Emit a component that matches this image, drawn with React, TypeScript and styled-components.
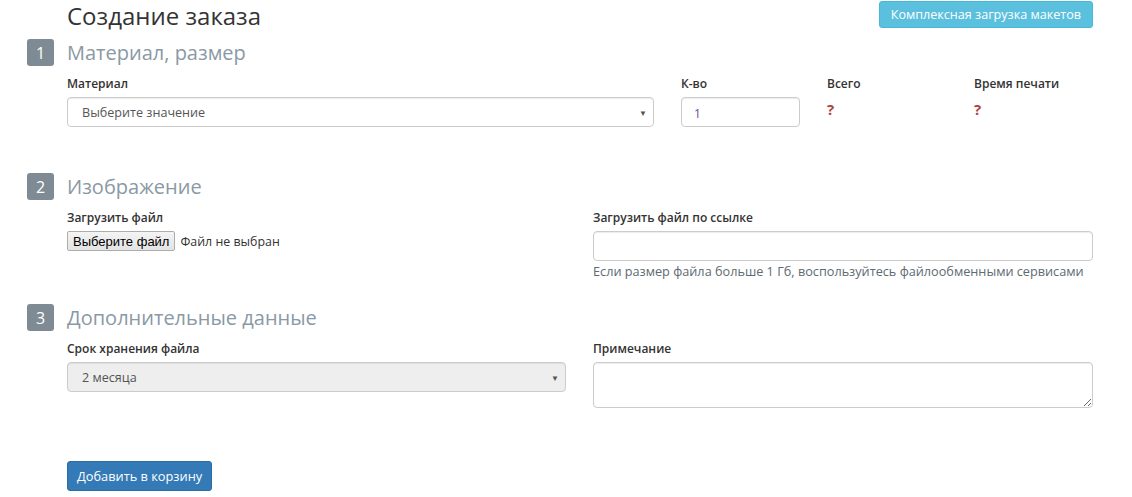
import styled, { createGlobalStyle } from "styled-components";

const GlobalStyle = createGlobalStyle`
  body {
    margin: 0;
    background: #fff;
    font-family: "Open Sans", "Liberation Sans", sans-serif;
    font-size: 13px;
    color: #333;
  }
  * { box-sizing: border-box; }
`;

const sections = {
  material: "Материал, размер",
  image: "Изображение",
  extra: "Дополнительные данные",
};

const App = () => {
  return (
    <Page>
      <GlobalStyle />
      <TitleRow>
        <Title>Создание заказа</Title>
        <InfoButton>Комплексная загрузка макетов</InfoButton>
      </TitleRow>

      <SectionHeader>
        <Badge>1</Badge>
        <SectionTitle>{sections.material}</SectionTitle>
      </SectionHeader>
      <MaterialGrid>
        <Field>
          <Label>Материал</Label>
          <Select>
            <span>Выберите значение</span>
            <Caret>▼</Caret>
          </Select>
        </Field>
        <Field>
          <Label>К-во</Label>
          <Input>
            <QtyValue>1</QtyValue>
          </Input>
        </Field>
        <Field>
          <Label>Всего</Label>
          <Unknown>?</Unknown>
        </Field>
        <Field>
          <Label>Время печати</Label>
          <Unknown>?</Unknown>
        </Field>
      </MaterialGrid>

      <SectionHeader $top={46}>
        <Badge>2</Badge>
        <SectionTitle>{sections.image}</SectionTitle>
      </SectionHeader>
      <TwoCols>
        <Field>
          <Label>Загрузить файл</Label>
          <FilePicker>
            <FileButton>Выберите файл</FileButton>
            <FileName>Файл не выбран</FileName>
          </FilePicker>
        </Field>
        <Field>
          <Label>Загрузить файл по ссылке</Label>
          <Input />
          <Help>Если размер файла больше 1 Гб, воспользуйтесь файлообменными сервисами</Help>
        </Field>
      </TwoCols>

      <SectionHeader $top={24}>
        <Badge>3</Badge>
        <SectionTitle>{sections.extra}</SectionTitle>
      </SectionHeader>
      <TwoCols>
        <Field>
          <Label>Срок хранения файла</Label>
          <Select $disabled>
            <span>2 месяца</span>
            <Caret>▼</Caret>
          </Select>
        </Field>
        <Field>
          <Label>Примечание</Label>
          <TextArea />
        </Field>
      </TwoCols>

      <Actions>
        <PrimaryButton>Добавить в корзину</PrimaryButton>
      </Actions>
    </Page>
  );
};

const Page = styled.div`
  width: 1132px;
  padding: 0 39px 0 27px;
`;

const TitleRow = styled.div`
  display: flex;
  justify-content: space-between;
  align-items: flex-start;
  margin-left: 40px;
  height: 39px;
`;

const Title = styled.h1`
  margin: 0;
  font-size: 24px;
  font-weight: 400;
  line-height: 32px;
  color: #333;
`;

const InfoButton = styled.button`
  margin-top: 1px;
  height: 27px;
  padding: 0 11px;
  border: 1px solid #46b8da;
  border-radius: 3px;
  background: #5bc0de;
  color: #fff;
  font-family: inherit;
  font-size: 12.6px;
`;

const SectionHeader = styled.div<{ $top?: number }>`
  display: flex;
  align-items: center;
  gap: 13px;
  height: 27px;
  margin-top: ${(p) => p.$top ?? 0}px;
`;

const Badge = styled.div`
  width: 27px;
  height: 27px;
  border-radius: 3px;
  background: #7f8b94;
  color: #fff;
  font-size: 16px;
  display: flex;
  align-items: center;
  justify-content: center;
`;

const SectionTitle = styled.h2`
  margin: 0;
  font-size: 20px;
  font-weight: 400;
  color: #8a99a4;
`;

const MaterialGrid = styled.div`
  display: grid;
  grid-template-columns: 587px 119px 120px 119px;
  column-gap: 27px;
  margin: 9px 0 0 40px;
`;

const TwoCols = styled.div`
  display: grid;
  grid-template-columns: 499px 500px;
  column-gap: 27px;
  margin: 9px 0 0 40px;
`;

const Field = styled.div`
  display: flex;
  flex-direction: column;
`;

const Label = styled.label`
  font-size: 12px;
  font-weight: 600;
  line-height: 17px;
  color: #333;
  margin-bottom: 5px;
`;

const Select = styled.div<{ $disabled?: boolean }>`
  height: 30px;
  border: 1px solid #ccc;
  border-radius: 4px;
  background: ${(p) => (p.$disabled ? "#eee" : "#fff")};
  box-shadow: inset 0 1px 1px rgba(0, 0, 0, 0.075);
  display: flex;
  align-items: center;
  justify-content: space-between;
  padding: 0 6px 0 14px;
  font-size: 12.6px;
  color: #555;
`;

const Caret = styled.span`
  font-size: 8px;
  color: #555;
`;

const Input = styled.div`
  height: 30px;
  border: 1px solid #ccc;
  border-radius: 4px;
  background: #fff;
  box-shadow: inset 0 1px 1px rgba(0, 0, 0, 0.075);
  display: flex;
  align-items: center;
  padding: 0 12px;
`;

const QtyValue = styled.span`
  font-size: 12px;
  color: #6a4a9c;
  padding-top: 2px;
`;

const Unknown = styled.span`
  font-size: 15px;
  font-weight: 700;
  color: #a94442;
  line-height: 20px;
  margin-top: 2px;
`;

const FilePicker = styled.div`
  display: flex;
  align-items: center;
  gap: 5px;
  height: 20px;
`;

const FileButton = styled.button`
  height: 20px;
  padding: 0 5px;
  border: 1px solid #adadad;
  border-radius: 2px;
  background: linear-gradient(#f4f4f4, #e3e3e3);
  font-family: "Liberation Sans", Arial, sans-serif;
  font-size: 13px;
  color: #000;
`;

const FileName = styled.span`
  font-size: 12.4px;
  color: #333;
`;

const Help = styled.div`
  margin-top: 2px;
  font-size: 12.7px;
  color: #5e6a72;
  line-height: 17px;
`;

const TextArea = styled.textarea`
  height: 46px;
  border: 1px solid #ccc;
  border-radius: 4px;
  box-shadow: inset 0 1px 1px rgba(0, 0, 0, 0.075);
  resize: vertical;
  font-family: inherit;
`;

const Actions = styled.div`
  margin: 53px 0 0 40px;
`;

const PrimaryButton = styled.button`
  height: 30px;
  padding: 0 9px;
  border: 1px solid #2e6da4;
  border-radius: 3px;
  background: #337ab7;
  color: #fff;
  font-family: inherit;
  font-size: 12.8px;
`;

export default App;
